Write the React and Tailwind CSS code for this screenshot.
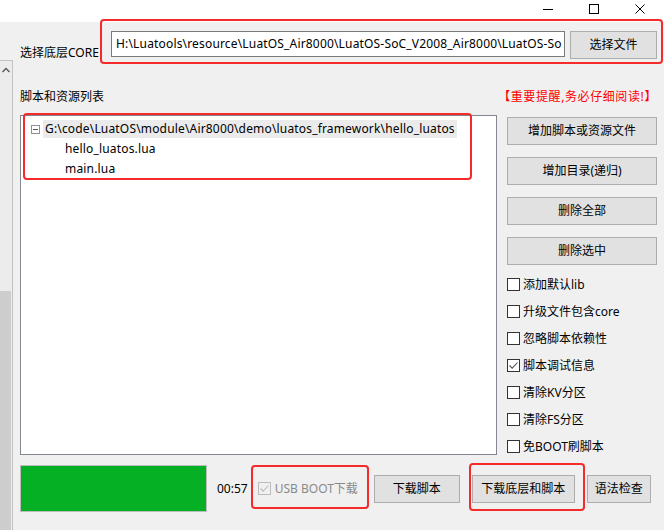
import { useState } from "react";

const font = '"Noto Sans", "Noto Sans CJK SC", sans-serif';

function WinButton({ label, className }) {
  return (
    <button
      className={`flex items-center justify-center bg-[#e1e1e1] border border-[#adadad] text-[12px] leading-none text-black ${className}`}
    >
      {label}
    </button>
  );
}

function Check({ label, checked, disabled }) {
  return (
    <div className="flex items-center h-[13px]">
      <div
        className={`w-[13px] h-[13px] border flex items-center justify-center ${
          disabled ? "border-[#bcbcbc] bg-[#f0f0f0]" : "border-[#333] bg-white"
        }`}
      >
        {checked && (
          <svg width="11" height="11" viewBox="0 0 11 11">
            <path
              d="M1.5 5.5 L4.2 8.2 L9.5 2.5"
              fill="none"
              stroke={disabled ? "#bcbcbc" : "#555"}
              strokeWidth="1.1"
            />
          </svg>
        )}
      </div>
      <span
        className={`text-[12px] leading-none ${
          disabled ? "text-[#8a8a8a] ml-[4px]" : "text-black ml-[3px]"
        }`}
      >
        {label}
      </span>
    </div>
  );
}

function RedBox({ className }) {
  return (
    <div
      className={`absolute border-2 border-[#f52b2b] rounded-[4px] pointer-events-none ${className}`}
    />
  );
}

export default function App() {
  const [options] = useState([
    { label: "添加默认lib", checked: false },
    { label: "升级文件包含core", checked: false },
    { label: "忽略脚本依赖性", checked: false },
    { label: "脚本调试信息", checked: true },
    { label: "清除KV分区", checked: false },
    { label: "清除FS分区", checked: false },
    { label: "免BOOT刷脚本", checked: false },
  ]);

  return (
    <div
      className="relative w-[664px] h-[530px] overflow-hidden bg-[#f0f0f0] text-black"
      style={{ fontFamily: font }}
    >
      {/* title bar */}
      <div className="h-[22px] bg-white flex justify-end items-start">
        <div className="flex items-center h-[18px] gap-[36px] pr-[19px]">
          <div className="w-[10px] h-px bg-black" />
          <div className="w-[10px] h-[10px] border border-black" />
          <svg width="10" height="10" viewBox="0 0 10 10">
            <path d="M0.5 0.5 L9.5 9.5 M9.5 0.5 L0.5 9.5" stroke="#000" strokeWidth="1" />
          </svg>
        </div>
      </div>

      <div className="flex h-[508px]">
        {/* scroll strip of the window behind */}
        <div className="w-[13px] pt-[38px] flex flex-col">
          <div className="flex-1 flex flex-col border-t border-r border-[#c2c2c2] bg-[#ececec]">
            <div className="h-[230px] pt-[6px] pl-[2px]">
              <svg width="8" height="6" viewBox="0 0 8 6">
                <path d="M0.5 5 L4 1.5 L7.5 5" fill="none" stroke="#555" strokeWidth="1.3" />
              </svg>
            </div>
            <div className="flex-1 bg-[#cdcdcd] mr-[1px]" />
          </div>
        </div>

        {/* main content */}
        <div className="w-[637px] ml-[7px] flex flex-col">
          <div className="flex items-start h-[37px] pt-[9px]">
            <div className="w-[91px] pt-[15px] text-[12px] leading-[14px]">选择底层CORE</div>
            <div className="w-[454px] h-[26px] bg-white border border-[#7a7a7a] flex items-center pl-[4px] overflow-hidden whitespace-nowrap text-[12px] tracking-[0.17px]">
              H:\Luatools\resource\LuatOS_Air8000\LuatOS-SoC_V2008_Air8000\LuatOS-So
            </div>
            <WinButton label="选择文件" className="ml-[5px] w-[87px] h-[28px]" />
          </div>

          <div className="flex justify-between h-[56px] pt-[31px] text-[12px] leading-[14px]">
            <span>脚本和资源列表</span>
            <span className="text-[#f00] tracking-[0.6px]">【重要提醒,务必仔细阅读!】</span>
          </div>

          <div className="flex">
            <div className="w-[477px] h-[340px] bg-white border border-[#828790] pt-[4px] pl-[10px]">
              <div className="flex items-center h-[18px]">
                <div className="w-[9px] h-[9px] border border-[#919191] flex items-center justify-center">
                  <div className="w-[5px] h-px bg-[#555]" />
                </div>
                <div className="ml-[3px] h-[18px] w-[414px] bg-[#ebebeb] flex items-center pl-[2px] text-[12px] tracking-[0.17px] whitespace-nowrap">
                  G:\code\LuatOS\module\Air8000\demo\luatos_framework\hello_luatos
                </div>
              </div>
              <div className="h-[20px] flex items-center pl-[34px] mt-px text-[12px] tracking-[0.17px]">hello_luatos.lua</div>
              <div className="h-[20px] flex items-center pl-[34px] text-[12px] tracking-[0.17px]">main.lua</div>
            </div>

            <div className="ml-[10px] w-[150px] pt-[2px] flex flex-col">
              <div className="flex flex-col gap-[12px]">
                <WinButton label="增加脚本或资源文件" className="h-[28px]" />
                <WinButton label="增加目录(递归)" className="h-[28px]" />
                <WinButton label="删除全部" className="h-[28px]" />
                <WinButton label="删除选中" className="h-[28px]" />
              </div>
              <div className="flex flex-col gap-[14px] mt-[13px]">
                {options.map((o) => (
                  <Check key={o.label} label={o.label} checked={o.checked} />
                ))}
              </div>
            </div>
          </div>

          <div className="flex items-start mt-[10px]">
            <div className="w-[187px] h-[47px] bg-[#06b025] border border-[#bcbcbc]" />
            <div className="h-[47px] flex items-center ml-[10px] text-[12px]">00:57</div>
            <div className="h-[47px] flex items-center ml-[10px]">
              <Check label="USB BOOT下载" checked disabled />
            </div>
            <WinButton label="下载脚本" className="mt-[10px] ml-[16px] w-[86px] h-[28px]" />
            <WinButton label="下载底层和脚本" className="mt-[10px] ml-[12px] w-[103px] h-[28px]" />
            <WinButton label="语法检查" className="mt-[10px] ml-[12px] w-[64px] h-[28px]" />
          </div>
        </div>
      </div>

      {/* annotation boxes */}
      <RedBox className="left-[100px] top-[19px] w-[563px] h-[45px]" />
      <RedBox className="left-[23px] top-[113px] w-[449px] h-[67px]" />
      <RedBox className="left-[251px] top-[465px] w-[118px] h-[44px]" />
      <RedBox className="left-[469px] top-[463px] w-[116px] h-[48px]" />
    </div>
  );
}
